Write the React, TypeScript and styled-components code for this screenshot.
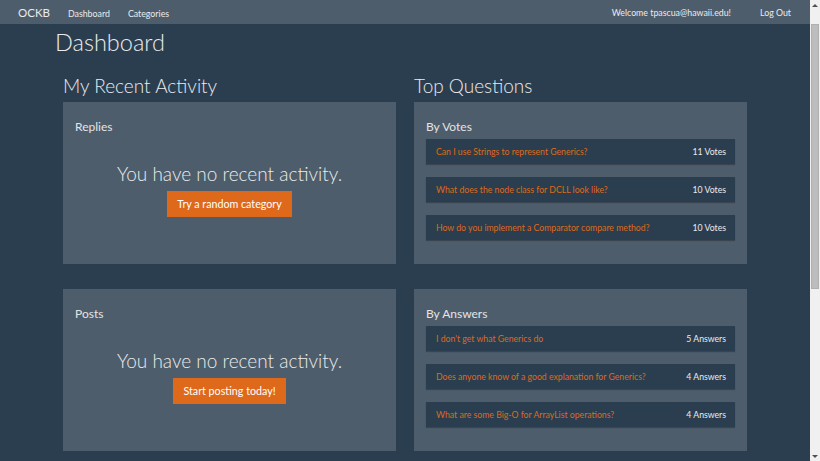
import React from "react";
import styled, { createGlobalStyle } from "styled-components";

const GlobalStyle = createGlobalStyle`
  html, body {
    margin: 0;
    padding: 0;
    overflow: hidden;
  }
  body {
    background: #2b3e50;
    color: #ebebeb;
    font-family: Lato, "Noto Sans", sans-serif;
  }
  * { box-sizing: border-box; }
`;

const Frame = styled.div`
  display: flex;
  height: 100vh;
`;

const Viewport = styled.div`
  flex: 1;
  min-width: 0;
  overflow: hidden;
`;

const ScrollRail = styled.div`
  width: 10px;
  background: #f0f0f0;
  display: flex;
  flex-direction: column;
  align-items: center;
`;

const ArrowBox = styled.div`
  height: 10px;
  width: 10px;
  display: flex;
  align-items: center;
  justify-content: center;
`;

const Arrow = styled.span<{ $dir: "up" | "down" }>`
  width: 0;
  height: 0;
  border-left: 3px solid transparent;
  border-right: 3px solid transparent;
  ${(p) =>
    p.$dir === "up"
      ? "border-bottom: 3px solid #505050;"
      : "border-top: 3px solid #505050;"}
`;

const Thumb = styled.div`
  width: 8px;
  height: 265px;
  margin-top: 14px;
  background: #bdbdbd;
  border: 1px solid #b0b0b0;
`;

const RailSpacer = styled.div`
  flex: 1;
`;

const Navbar = styled.nav`
  height: 24px;
  background: #4e5d6c;
  display: flex;
  align-items: center;
  justify-content: space-between;
  padding: 0 19px 0 18px;
`;

const NavGroup = styled.div<{ $gap: number }>`
  display: flex;
  align-items: baseline;
  gap: ${(p) => p.$gap}px;
`;

const Brand = styled.a`
  font-size: 11.5px;
  color: #ebebeb;
  text-decoration: none;
`;

const NavLink = styled.a`
  font-size: 8.8px;
  color: #ebebeb;
  text-decoration: none;
`;

const Page = styled.main`
  padding-left: 55px;
`;

const PageTitle = styled.h1`
  font-size: 23.5px;
  font-weight: 300;
  line-height: 30px;
  margin: 2.5px 0 0;
  color: #ebebeb;
`;

const Columns = styled.div`
  display: grid;
  grid-template-columns: 333px 333px;
  column-gap: 18px;
  margin: 18.5px 0 0 8px;
`;

const Column = styled.section`
  display: flex;
  flex-direction: column;
`;

const SectionTitle = styled.h2`
  font-size: 19px;
  font-weight: 300;
  line-height: 22px;
  margin: 0 0 5px;
  color: #ebebeb;
`;

const Panel = styled.div`
  background: #4e5d6c;
  height: 162px;
  padding: 18px 12px;

  & + & {
    margin-top: 25px;
  }
`;

const PanelTitle = styled.h4`
  font-size: 12px;
  font-weight: 400;
  line-height: 14px;
  margin: 0 0 5px;
  color: #e4e4e4;
`;

const EmptyState = styled.div`
  display: flex;
  flex-direction: column;
  align-items: center;
  margin-top: 29px;
`;

const EmptyMessage = styled.p`
  font-size: 19px;
  font-weight: 300;
  line-height: 22px;
  margin: 0 0 5.75px;
  color: #ebebeb;
`;

const ActionButton = styled.button`
  background: #df691a;
  color: #ffffff;
  border: 0;
  border-radius: 0;
  height: 26px;
  padding: 0 10.5px;
  font-family: Lato, "Noto Sans", sans-serif;
  font-size: 10.7px;
  cursor: pointer;
`;

const QuestionRow = styled.div`
  display: flex;
  align-items: center;
  justify-content: space-between;
  height: 25px;
  padding: 0 9px 0 10px;
  margin-bottom: 13px;
  background: #2b3e50;
  box-shadow: 0 1px 1px rgba(0, 0, 0, 0.25);
  font-size: 8.7px;
`;

const QuestionLink = styled.a`
  color: #df691a;
  text-decoration: none;
`;

const Count = styled.span`
  color: #ebebeb;
`;

type Q = { title: string; count: string };

const byVotes: Q[] = [
  { title: "Can I use Strings to represent Generics?", count: "11 Votes" },
  { title: "What does the node class for DCLL look like?", count: "10 Votes" },
  { title: "How do you implement a Comparator compare method?", count: "10 Votes" },
];

const byAnswers: Q[] = [
  { title: "I don't get what Generics do", count: "5 Answers" },
  { title: "Does anyone know of a good explanation for Generics?", count: "4 Answers" },
  { title: "What are some Big-O for ArrayList operations?", count: "4 Answers" },
];

function EmptyPanel({ title, action }: { title: string; action: string }) {
  return (
    <Panel>
      <PanelTitle>{title}</PanelTitle>
      <EmptyState>
        <EmptyMessage>You have no recent activity.</EmptyMessage>
        <ActionButton>{action}</ActionButton>
      </EmptyState>
    </Panel>
  );
}

function QuestionPanel({ title, items }: { title: string; items: Q[] }) {
  return (
    <Panel>
      <PanelTitle>{title}</PanelTitle>
      {items.map((q) => (
        <QuestionRow key={q.title}>
          <QuestionLink href="#">{q.title}</QuestionLink>
          <Count>{q.count}</Count>
        </QuestionRow>
      ))}
    </Panel>
  );
}

export default function App() {
  return (
    <>
      <GlobalStyle />
      <Frame>
        <Viewport>
          <Navbar>
            <NavGroup $gap={18}>
              <Brand href="#">OCKB</Brand>
              <NavLink href="#">Dashboard</NavLink>
              <NavLink href="#">Categories</NavLink>
            </NavGroup>
            <NavGroup $gap={29}>
              <NavLink as="span">Welcome tpascua@hawaii.edu!</NavLink>
              <NavLink href="#">Log Out</NavLink>
            </NavGroup>
          </Navbar>
          <Page>
            <PageTitle>Dashboard</PageTitle>
            <Columns>
              <Column>
                <SectionTitle>My Recent Activity</SectionTitle>
                <EmptyPanel title="Replies" action="Try a random category" />
                <EmptyPanel title="Posts" action="Start posting today!" />
              </Column>
              <Column>
                <SectionTitle>Top Questions</SectionTitle>
                <QuestionPanel title="By Votes" items={byVotes} />
                <QuestionPanel title="By Answers" items={byAnswers} />
              </Column>
            </Columns>
          </Page>
        </Viewport>
        <ScrollRail aria-hidden="true">
          <ArrowBox>
            <Arrow $dir="up" />
          </ArrowBox>
          <Thumb />
          <RailSpacer />
          <ArrowBox>
            <Arrow $dir="down" />
          </ArrowBox>
        </ScrollRail>
      </Frame>
    </>
  );
}
